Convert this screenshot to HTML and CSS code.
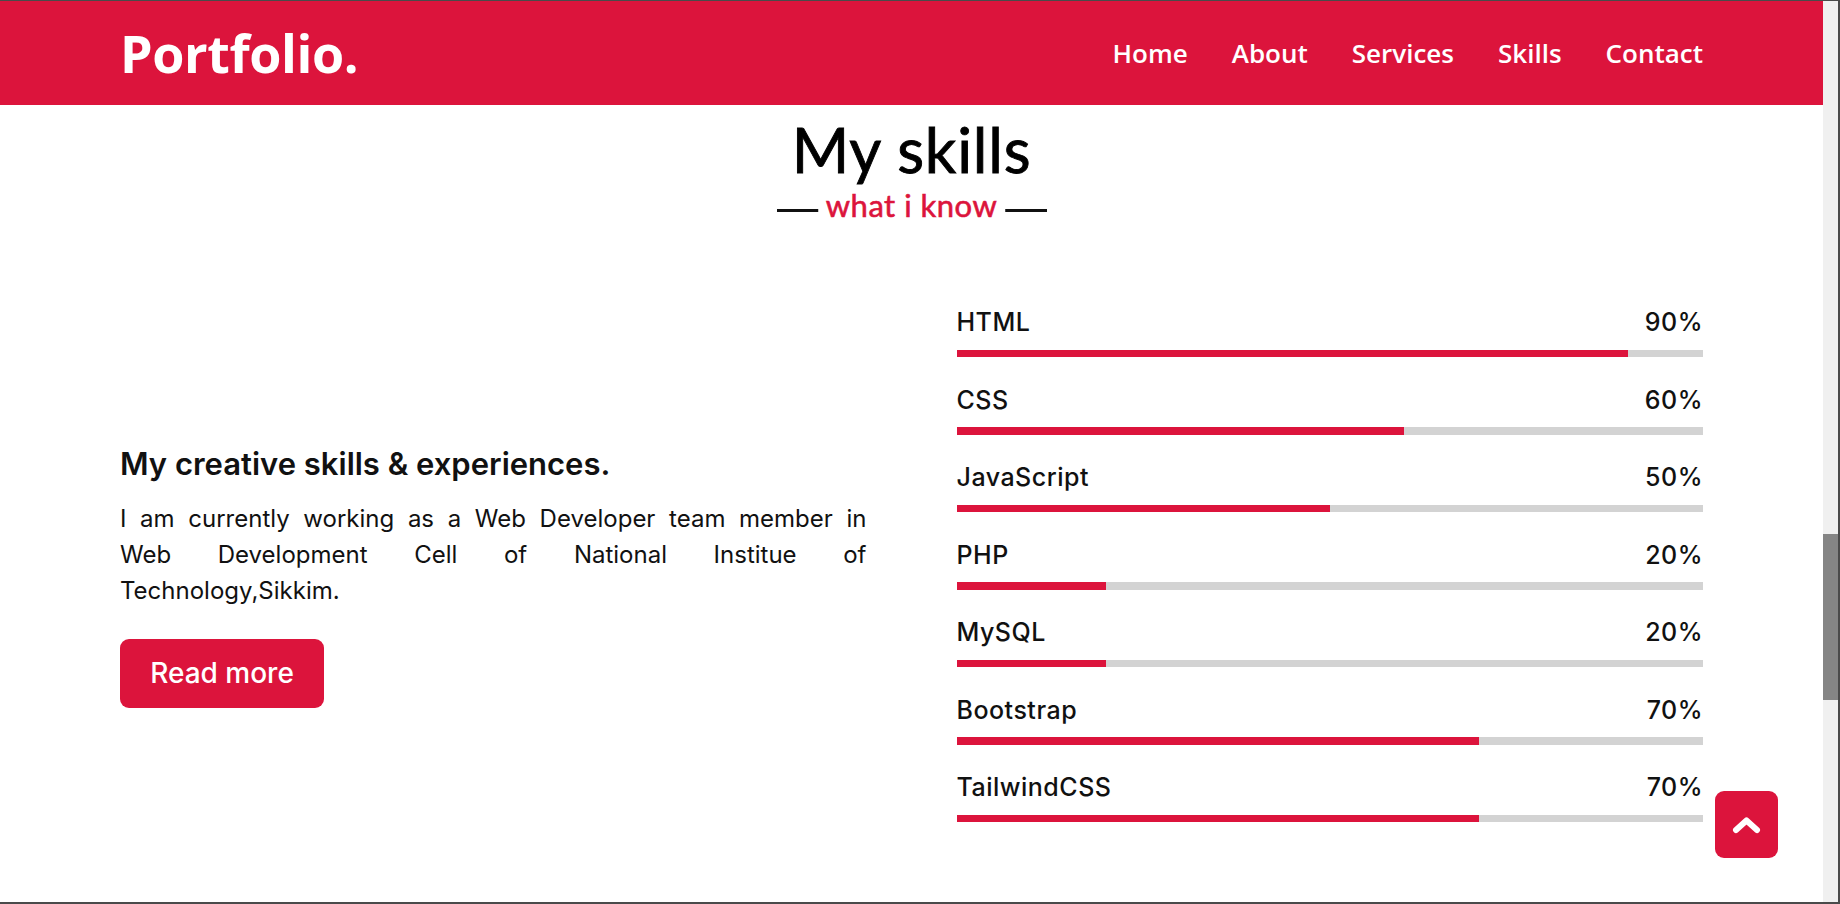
FILE: index.html
```html
<!DOCTYPE html>
<html lang="en">
<head>
<meta charset="utf-8">
<title>Portfolio</title>
<link rel="stylesheet" href="styles.css">
</head>
<body>
<div class="frame">
  <div class="viewport">
    <header class="navbar">
      <div class="max-width nav-inner">
        <a class="logo" href="#">Portfolio.</a>
        <ul class="menu">
          <li><a href="#">Home</a></li>
          <li><a href="#">About</a></li>
          <li><a href="#">Services</a></li>
          <li><a href="#">Skills</a></li>
          <li><a href="#">Contact</a></li>
        </ul>
      </div>
    </header>
    <section class="skills">
      <div class="max-width">
        <h2 class="title">My skills<span class="sub">what i know</span></h2>
        <div class="skills-content">
          <div class="column left">
            <div class="text">My creative skills &amp; experiences.</div>
            <p><span class="jl">I am currently working as a Web Developer team member in</span><span class="jl">Web Development Cell of National Institue of</span><span class="last">Technology,Sikkim.</span></p>
            <a class="btn" href="#">Read more</a>
          </div>
          <div class="column right">
            <div class="bar"><div class="info"><span>HTML</span><span>90%</span></div><div class="line"><div class="fill" style="width:90%"></div></div></div>
            <div class="bar"><div class="info"><span>CSS</span><span>60%</span></div><div class="line"><div class="fill" style="width:60%"></div></div></div>
            <div class="bar"><div class="info"><span>JavaScript</span><span>50%</span></div><div class="line"><div class="fill" style="width:50%"></div></div></div>
            <div class="bar"><div class="info"><span>PHP</span><span>20%</span></div><div class="line"><div class="fill" style="width:20%"></div></div></div>
            <div class="bar"><div class="info"><span>MySQL</span><span>20%</span></div><div class="line"><div class="fill" style="width:20%"></div></div></div>
            <div class="bar"><div class="info"><span>Bootstrap</span><span>70%</span></div><div class="line"><div class="fill" style="width:70%"></div></div></div>
            <div class="bar"><div class="info"><span>TailwindCSS</span><span>70%</span></div><div class="line"><div class="fill" style="width:70%"></div></div></div>
          </div>
        </div>
      </div>
    </section>
    <a class="scroll-up" href="#" aria-label="Scroll up">
      <svg width="29" height="18" viewBox="0 0 29 18"><polyline points="4,14 14.5,4.5 25,14" fill="none" stroke="#fff" stroke-width="6" stroke-linecap="round" stroke-linejoin="round"/></svg>
    </a>
  </div>
  <div class="scrollbar"><div class="thumb"></div></div>
</div>
</body>
</html>
```
FILE: styles.css
```css
* { box-sizing: border-box; margin: 0; padding: 0; }
html, body { width: 1840px; height: 904px; overflow: hidden; background: #4a4a4a; }
body { font-family: "Inter", "Liberation Sans", sans-serif; color: #111; }
a { text-decoration: none; }

.frame {
  width: 1840px;
  height: 904px;
  border-top: 1px solid #4a4a4a;
  border-right: 2px solid #4a4a4a;
  border-bottom: 2px solid #4a4a4a;
  display: flex;
}
.viewport {
  position: relative;
  width: 1823px;
  height: 901px;
  background: #fff;
  overflow: hidden;
}
.scrollbar {
  width: 15px;
  height: 901px;
  background: #f0f0f0;
  padding-top: 533px;
}
.thumb { height: 166px; background: #858585; }

.max-width { padding: 0 120px; }

.navbar { background: #dc143c; height: 104px; }
.nav-inner { height: 104px; display: flex; align-items: center; justify-content: space-between; }
.logo {
  font-family: "Open Sans", "Noto Sans", sans-serif;
  font-weight: 700;
  font-size: 52px;
  line-height: 60px;
  color: #fff;
  letter-spacing: -0.4px;
}
.menu { list-style: none; display: flex; gap: 44px; }
.menu a {
  font-family: "Open Sans", "Noto Sans", sans-serif;
  font-weight: 600;
  font-size: 26px;
  line-height: 40px;
  color: #fff;
  display: block;
}

.skills { padding-top: 7px; }
.title {
  position: relative;
  text-align: center;
  font-family: "Lato", "Open Sans", sans-serif;
  font-weight: 400;
  font-size: 62px;
  line-height: 74px;
  letter-spacing: 0.8px;
  padding-bottom: 26px;
  margin-bottom: 89px;
  color: #000;
  -webkit-text-stroke: 0.9px #000;
}
.title::before {
  content: "";
  position: absolute;
  left: 50%;
  bottom: 0;
  width: 270px;
  height: 3px;
  background: #111;
  transform: translateX(-50%);
}
.title .sub {
  position: absolute;
  left: 50%;
  bottom: -11px;
  transform: translateX(-50%);
  font-size: 31px;
  line-height: 36px;
  font-weight: 400;
  letter-spacing: 0.5px;
  color: #dc143c;
  background: #fff;
  padding: 0 8px;
  white-space: nowrap;
  -webkit-text-stroke: 0.6px #dc143c;
}

.skills-content { display: flex; justify-content: space-between; align-items: center; }
.column { width: calc(50% - 45px); }
.left { margin-top: 4px; }

.left .text { font-size: 31px; font-weight: 600; line-height: 45px; margin-bottom: 15px; color: #111; }
.left p { font-size: 24px; line-height: 36px; color: #111; }
.left p .jl { display: block; text-align: justify; text-align-last: justify; }
.left p .last { display: block; }
.btn {
  display: inline-flex;
  align-items: center;
  justify-content: center;
  margin-top: 30px;
  width: 204px;
  height: 69px;
  background: #dc143c;
  color: #fff;
  font-size: 28px;
  font-weight: 500;
  border-radius: 9px;
}

.bar { margin-bottom: 21.5px; }
.info { display: flex; justify-content: space-between; margin-bottom: 6.5px; }
.info span { font-size: 25px; font-weight: 500; line-height: 42px; color: #111; letter-spacing: 0.5px; }
.line { height: 7.5px; background: #d3d3d3; }
.fill { height: 100%; background: #dc143c; }

.scroll-up {
  position: absolute;
  left: 1715px;
  top: 790px;
  width: 63px;
  height: 67px;
  background: #dc143c;
  border-radius: 9px;
  display: flex;
  align-items: center;
  justify-content: center;
}
```
